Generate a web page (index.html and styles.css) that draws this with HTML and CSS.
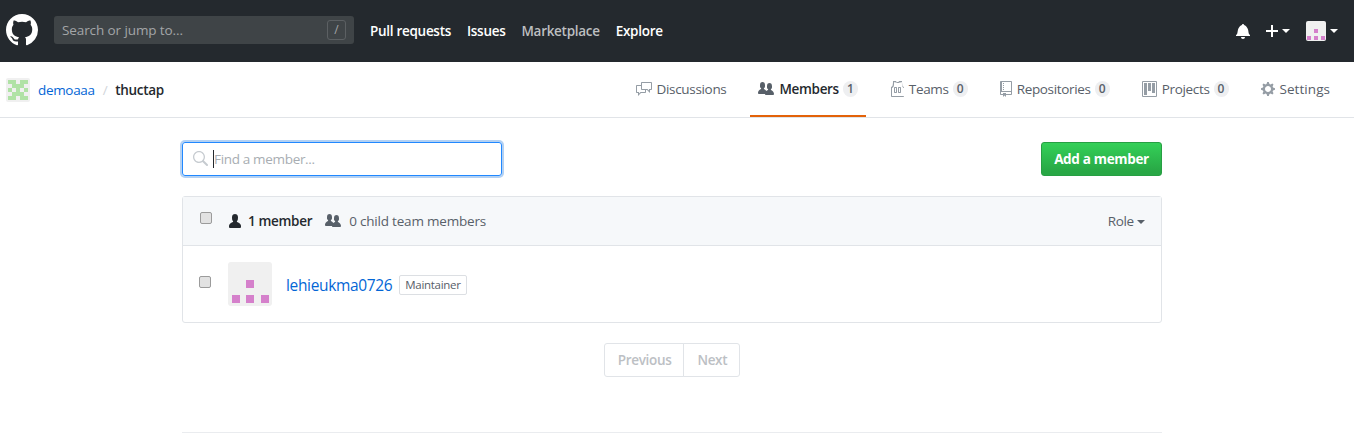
FILE: index.html
```html
<!DOCTYPE html>
<html lang="en">
<head>
  <meta charset="UTF-8">
  <title>demoaaa / thuctap - Members</title>
  <link rel="stylesheet" href="styles.css">
</head>
<body>

  <header class="topbar">
    <svg class="logo" viewBox="0 0 16 16"><path d="M8 0C3.58 0 0 3.58 0 8c0 3.54 2.29 6.53 5.47 7.59.4.07.55-.17.55-.38 0-.19-.01-.82-.01-1.49-2.01.37-2.53-.49-2.69-.94-.09-.23-.48-.94-.82-1.13-.28-.15-.68-.52-.01-.53.63-.01 1.08.58 1.23.82.72 1.21 1.87.87 2.33.66.07-.52.28-.87.51-1.07-1.78-.2-3.64-.89-3.64-3.95 0-.87.31-1.59.82-2.15-.08-.2-.36-1.02.08-2.12 0 0 .67-.21 2.2.82.64-.18 1.32-.27 2-.27.68 0 1.36.09 2 .27 1.53-1.04 2.2-.82 2.2-.82.44 1.1.16 1.92.08 2.12.51.56.82 1.27.82 2.15 0 3.07-1.87 3.75-3.65 3.95.29.25.54.73.54 1.48 0 1.07-.01 1.93-.01 2.2 0 .21.15.46.55.38A8.013 8.013 0 0016 8c0-4.42-3.58-8-8-8z"/></svg>
    <div class="jump">
      <span>Search or jump to...</span>
      <kbd>/</kbd>
    </div>
    <nav class="topnav">
      <a>Pull requests</a>
      <a>Issues</a>
      <a class="dim">Marketplace</a>
      <a>Explore</a>
    </nav>
    <div class="topright">
      <svg class="bell" viewBox="0 0 14 16"><path d="M14 12v1H0v-1l.73-.58c.77-.77.81-2.55 1.19-4.42C2.69 3.23 6 2 6 2c0-.55.45-1 1-1s1 .45 1 1c0 0 3.39 1.23 4.16 5 .38 1.88.42 3.66 1.19 4.42l.66.58H14zm-7 4c1.11 0 2-.89 2-2H5c0 1.11.89 2 2 2z"/></svg>
      <div class="menu">
        <svg class="plus" viewBox="0 0 12 16"><path d="M12 9H7v5H5V9H0V7h5V2h2v5h5v2z"/></svg>
        <i class="caret"></i>
      </div>
      <div class="menu">
        <svg class="avatar-small" viewBox="0 0 20 20">
          <rect width="20" height="20" rx="2" fill="#f0f0f0"/>
          <rect x="8" y="8" width="4" height="4" fill="#d580cb"/>
          <rect x="1" y="15" width="4" height="4" fill="#d580cb"/>
          <rect x="8" y="15" width="4" height="4" fill="#d580cb"/>
          <rect x="15" y="15" width="4" height="4" fill="#d580cb"/>
        </svg>
        <i class="caret"></i>
      </div>
    </div>
  </header>

  <div class="teamhead">
    <div class="crumbs">
      <svg class="orgavatar" viewBox="0 0 24 24">
        <rect width="24" height="24" rx="2" fill="#f0f0f0"/>
        <path fill="#b0e2a6" d="M2 2h8v4H2zM14 2h8v4h-8zM6 6h12v4H6zM2 10h4v4H2zM10 10h4v4h-4zM18 10h4v4h-4zM6 14h12v4H6zM2 18h8v4H2zM14 18h8v4h-8z"/>
      </svg>
      <a class="org">demoaaa</a>
      <span class="slash">/</span>
      <strong>thuctap</strong>
    </div>
    <nav class="tabs">
      <a class="tab">
        <svg viewBox="0 0 16 16" width="16" height="16"><path d="M15 1H6c-.55 0-1 .45-1 1v2H1c-.55 0-1 .45-1 1v6c0 .55.45 1 1 1h1v3l3-3h4c.55 0 1-.45 1-1V9h1l3 3V9h1c.55 0 1-.45 1-1V2c0-.55-.45-1-1-1zM9 11H4.5L3 12.5V11H1V5h4v3c0 .55.45 1 1 1h3v2zm6-3h-2v1.5L11.5 8H6V2h9v6z"/></svg>
        Discussions
      </a>
      <a class="tab selected">
        <svg viewBox="0 0 16 16" width="16" height="16"><path d="M16 12.999c0 .439-.45 1-1 1H7.995c-.539 0-.994-.447-.995-.999H1c-.54 0-1-.561-1-1 0-2.634 3-4 3-4s.229-.409 0-1c-.841-.621-1.058-.59-1-3 .058-2.419 1.367-3 2.5-3s2.442.58 2.5 3c.058 2.41-.159 2.379-1 3-.229.59 0 1 0 1s1.549.711 2.42 2.088C9.196 9.369 10 8.999 10 8.999s.229-.409 0-1c-.841-.62-1.058-.59-1-3 .058-2.419 1.367-3 2.5-3s2.437.581 2.495 3c.059 2.41-.158 2.38-1 3-.229.59 0 1 0 1s3.005 1.366 3.005 4z"/></svg>
        Members <span class="count">1</span>
      </a>
      <a class="tab">
        <svg viewBox="0 0 14 16" width="14" height="16" fill-rule="evenodd"><path d="M4.5 6l-.5.5v5l.5.5h2l.5-.5v-5L6.5 6h-2zM6 11H5V7h1v4zm6.27-7.25C12.05 2.37 11.96 1.12 12 0H9.02c0 .27-.13.48-.39.69-.25.2-.63.3-1.13.3-.5 0-.88-.09-1.13-.3-.23-.2-.36-.42-.36-.69H3c.05 1.13-.03 2.38-.25 3.75C2.55 5.13 1.95 5.88 1 6v9c.02.55.45 1 1 1h11c.55 0 1-.45 1-1V6c-.95-.12-1.55-.87-1.73-2.25zM13 15H2V7c.89-.19 1.5-.83 1.8-1.94.25-1.22.33-2.5.2-3.75 1 .11 1.78.14 2.31.08.69.29 1.05.6 1.69.61.64 0 1-.32 1.69-.61.53.06 1.31.03 2.31-.08-.13 1.25-.05 2.53.2 3.75.3 1.11.91 1.75 1.8 1.94v8zM8.5 6l-.5.5v5l.5.5h2l.5-.5v-5l-.5-.5h-2zm1.5 5H9V7h1v4z"/></svg>
        Teams <span class="count">0</span>
      </a>
      <a class="tab">
        <svg viewBox="0 0 12 16" width="12" height="16" fill-rule="evenodd"><path d="M4 9H3V8h1v1zm0-3H3v1h1V6zm0-2H3v1h1V4zm0-2H3v1h1V2zm8-1v12c0 .55-.45 1-1 1H6v2l-1.5-1.5L3 16v-2H1c-.55 0-1-.45-1-1V1c0-.55.45-1 1-1h10c.55 0 1 .45 1 1zm-1 10H1v2h2v-1h3v1h5v-2zm0-10H2v9h9V1z"/></svg>
        Repositories <span class="count">0</span>
      </a>
      <a class="tab">
        <svg viewBox="0 0 15 16" width="15" height="16" fill-rule="evenodd"><path d="M10 12h3V2h-3v10zm-4-2h3V2H6v8zm-4 4h3V2H2v12zm-1 1h13V1H1v14zM14 0H1a1 1 0 00-1 1v14a1 1 0 001 1h13a1 1 0 001-1V1a1 1 0 00-1-1z"/></svg>
        Projects <span class="count">0</span>
      </a>
      <a class="tab settings">
        <svg viewBox="0 0 14 16" width="14" height="16" fill-rule="evenodd"><path d="M14 8.77v-1.6l-1.94-.64-.45-1.09.88-1.84-1.13-1.13-1.81.91-1.09-.45-.69-1.92h-1.6l-.63 1.94-1.11.45-1.84-.88-1.13 1.13.91 1.81-.45 1.09L0 7.23v1.59l1.94.64.45 1.09-.88 1.84 1.13 1.13 1.81-.91 1.09.45.69 1.92h1.59l.63-1.94 1.11-.45 1.84.88 1.13-1.13-.92-1.81.47-1.09L14 8.75v.02zM7 11c-1.66 0-3-1.34-3-3s1.34-3 3-3 3 1.34 3 3-1.34 3-3 3z"/></svg>
        Settings
      </a>
    </nav>
  </div>

  <main class="container">
    <div class="actions">
      <div class="finder">
        <svg viewBox="0 0 16 16" width="16" height="16"><path d="M15.7 13.3l-3.81-3.83A5.93 5.93 0 0013 6c0-3.31-2.69-6-6-6S1 2.69 1 6s2.69 6 6 6c1.3 0 2.48-.41 3.47-1.11l3.83 3.81c.19.2.45.3.7.3.25 0 .52-.09.7-.3a.996.996 0 000-1.41v.01zM7 10.7c-2.59 0-4.7-2.11-4.7-4.7 0-2.59 2.11-4.7 4.7-4.7 2.59 0 4.7 2.11 4.7 4.7 0 2.59-2.11 4.7-4.7 4.7z"/></svg>
        <i class="cursor"></i>
        <span>Find a member...</span>
      </div>
      <button class="btn-add">Add a member</button>
    </div>

    <section class="members">
      <div class="members-head">
        <input type="checkbox" class="check">
        <span class="stat strong">
          <svg viewBox="0 0 12 16" width="12" height="16"><path d="M12 14.002a.998.998 0 01-.998.998H1.001A1 1 0 010 13.999V13c0-2.633 4-4 4-4s.229-.409 0-1c-.841-.62-.944-1.59-1-4 .173-2.413 1.867-3 3-3s2.827.586 3 3c-.056 2.41-.159 3.38-1 4-.229.59 0 1 0 1s4 1.367 4 4v1.002z"/></svg>
          1 member
        </span>
        <span class="stat children">
          <svg viewBox="0 0 16 16" width="16" height="16"><path d="M16 12.999c0 .439-.45 1-1 1H7.995c-.539 0-.994-.447-.995-.999H1c-.54 0-1-.561-1-1 0-2.634 3-4 3-4s.229-.409 0-1c-.841-.621-1.058-.59-1-3 .058-2.419 1.367-3 2.5-3s2.442.58 2.5 3c.058 2.41-.159 2.379-1 3-.229.59 0 1 0 1s1.549.711 2.42 2.088C9.196 9.369 10 8.999 10 8.999s.229-.409 0-1c-.841-.62-1.058-.59-1-3 .058-2.419 1.367-3 2.5-3s2.437.581 2.495 3c.059 2.41-.158 2.38-1 3-.229.59 0 1 0 1s3.005 1.366 3.005 4z"/></svg>
          0 child team members
        </span>
        <span class="role">Role <i class="caret dark"></i></span>
      </div>
      <div class="member-row">
        <input type="checkbox" class="check">
        <svg class="avatar" viewBox="0 0 44 44">
          <rect width="44" height="44" rx="3" fill="#f0f0f0"/>
          <rect x="18" y="18" width="8" height="8" fill="#d580cb"/>
          <rect x="4" y="33" width="8" height="8" fill="#d580cb"/>
          <rect x="18" y="33" width="8" height="8" fill="#d580cb"/>
          <rect x="33" y="33" width="8" height="8" fill="#d580cb"/>
        </svg>
        <a class="username">lehieukma0726</a>
        <span class="label">Maintainer</span>
      </div>
    </section>

    <div class="pager">
      <span>Previous</span>
      <span>Next</span>
    </div>

    <div class="footer-line"></div>
  </main>

</body>
</html>
```

FILE: styles.css
```css
* {
  box-sizing: border-box;
}
html, body {
  height: 438px;
  overflow: hidden;
}
body {
  margin: 0;
  font-family: "Open Sans", "Noto Sans", sans-serif;
  font-size: 13.5px;
  color: #24292e;
  background-color: #fff;
  letter-spacing: -0.33px;
}
svg {
  fill: currentColor;
  flex: none;
}

/* top bar */
.topbar {
  display: flex;
  align-items: center;
  height: 62px;
  padding: 0 16px 2px 6px;
  background-color: #24292e;
  color: #fff;
}
.logo {
  width: 32px;
  height: 32px;
  margin-right: 16px;
}
.jump {
  display: flex;
  align-items: center;
  justify-content: space-between;
  width: 300px;
  height: 28px;
  padding: 0 8px;
  border-radius: 3px;
  background-color: #3f4447;
  color: #a3a6a8;
  letter-spacing: -0.1px;
}
.jump kbd {
  width: 19px;
  height: 20px;
  border: 1px solid #5c6063;
  border-radius: 3px;
  font-family: inherit;
  font-size: 12px;
  line-height: 18px;
  text-align: center;
}
.topnav {
  display: flex;
  gap: 16px;
  margin-top: 2px;
  margin-left: 16px;
  font-weight: 600;
  letter-spacing: -0.29px;
}
.topnav .dim {
  color: #bdbfc0;
}
.topright {
  display: flex;
  align-items: center;
  margin-top: 2px;
  margin-left: auto;
}
.bell {
  width: 16px;
  height: 16px;
  margin-right: 15px;
}
.menu {
  display: flex;
  align-items: center;
}
.plus {
  width: 12px;
  height: 16px;
}
.menu .caret {
  margin-left: 4px;
}
.menu + .menu {
  margin-left: 16px;
}
.avatar-small {
  width: 20px;
  height: 20px;
}
.caret {
  display: inline-block;
  border: 4px solid transparent;
  border-top-color: currentColor;
  border-bottom: 0;
  vertical-align: middle;
}
.caret.dark {
  color: #586069;
}

/* org / team row */
.teamhead {
  display: flex;
  align-items: stretch;
  justify-content: space-between;
  height: 56px;
  padding: 0 16px 0 6px;
  border-bottom: 1px solid #e1e4e8;
}
.crumbs {
  display: flex;
  align-items: center;
  padding-top: 1px;
}
.orgavatar {
  width: 24px;
  height: 24px;
  margin-right: 8px;
}
.org {
  color: #0366d6;
}
.slash {
  margin: 0 8px;
  color: #d1d5da;
}
.crumbs strong {
  font-weight: 600;
}
.tabs {
  display: flex;
}
.tab {
  display: flex;
  align-items: center;
  gap: 5px;
  margin-left: 16px;
  padding: 0 8px 2px;
  color: #586069;
}
.tab svg {
  fill: #959da5;
}
.tab.selected {
  border-bottom: 2px solid #e36209;
  padding-bottom: 0;
  font-weight: 600;
  color: #24292e;
}
.tab.selected svg {
  fill: #586069;
}
.tab.settings {
  letter-spacing: 0.05px;
}
.count {
  min-width: 15px;
  margin-left: -1px;
  padding: 0 4px;
  border-radius: 10px;
  background-color: #eeeff1;
  font-size: 12px;
  font-weight: 600;
  line-height: 16px;
  text-align: center;
  color: #586069;
  letter-spacing: 0;
}

/* main */
.container {
  width: 980px;
  margin-left: 182px;
  padding-top: 24px;
}
.actions {
  display: flex;
  justify-content: space-between;
  height: 34px;
  margin-bottom: 20px;
}
.finder {
  display: flex;
  align-items: center;
  width: 320px;
  padding-left: 9px;
  border: 1px solid #2188ff;
  border-radius: 3px;
  box-shadow: 0 0 0 2px rgba(3, 102, 214, 0.3);
  color: #a8adb2;
}
.finder svg {
  fill: #c6cbd0;
}
.cursor {
  width: 1px;
  height: 18px;
  margin-left: 5px;
  background-color: #24292e;
}
.btn-add {
  width: 121px;
  border: 1px solid #279f43;
  border-radius: 3px;
  background-image: linear-gradient(#34d058, #28a745 90%);
  color: #fff;
  font-family: inherit;
  font-size: 13.5px;
  font-weight: 700;
  letter-spacing: -0.33px;
}
.members {
  border: 1px solid #e1e4e8;
  border-radius: 3px;
}
.members-head {
  display: flex;
  align-items: center;
  height: 49px;
  padding: 0 16px 0 17px;
  border-bottom: 1px solid #e1e4e8;
  background-color: #f6f8fa;
  color: #586069;
}
.check {
  width: 12px;
  height: 12px;
  margin: -7px 0 0;
  appearance: none;
  border: 1px solid #9b9b9b;
  border-radius: 2px;
  background-color: #e2e2e2;
}
.stat {
  display: flex;
  align-items: center;
  gap: 7px;
  margin-left: 13px;
}
.members-head .check + .stat {
  margin-left: 17px;
}
.stat.strong {
  font-weight: 600;
  color: #24292e;
}
.stat.children {
  gap: 8px;
  letter-spacing: -0.2px;
}
.role {
  margin-left: auto;
}
.member-row {
  display: flex;
  align-items: center;
  height: 76px;
  padding-left: 16px;
}
.member-row .check {
  margin-top: -4px;
}
.avatar {
  width: 44px;
  height: 44px;
  margin-left: 17px;
}
.username {
  margin-top: 2px;
  margin-left: 14px;
  font-size: 15.5px;
  letter-spacing: -0.35px;
  color: #0366d6;
}
.label {
  margin-top: 2px;
  margin-left: 7px;
  padding: 0 5px;
  border: 1px solid #dcdfe3;
  border-radius: 2px;
  font-size: 11.5px;
  line-height: 18px;
  color: #586069;
  letter-spacing: -0.3px;
}
.pager {
  display: flex;
  justify-content: center;
  margin-top: 20px;
  color: #bcc0c4;
}
.pager span {
  height: 34px;
  padding: 0 12px 0 13px;
  border: 1px solid #e1e4e8;
  font-weight: 600;
  line-height: 32px;
}
.pager span:first-child {
  border-radius: 3px 0 0 3px;
}
.pager span:last-child {
  margin-left: -1px;
  border-radius: 0 3px 3px 0;
}
.footer-line {
  margin-top: 55px;
  border-top: 1px solid #eaecef;
}
```
